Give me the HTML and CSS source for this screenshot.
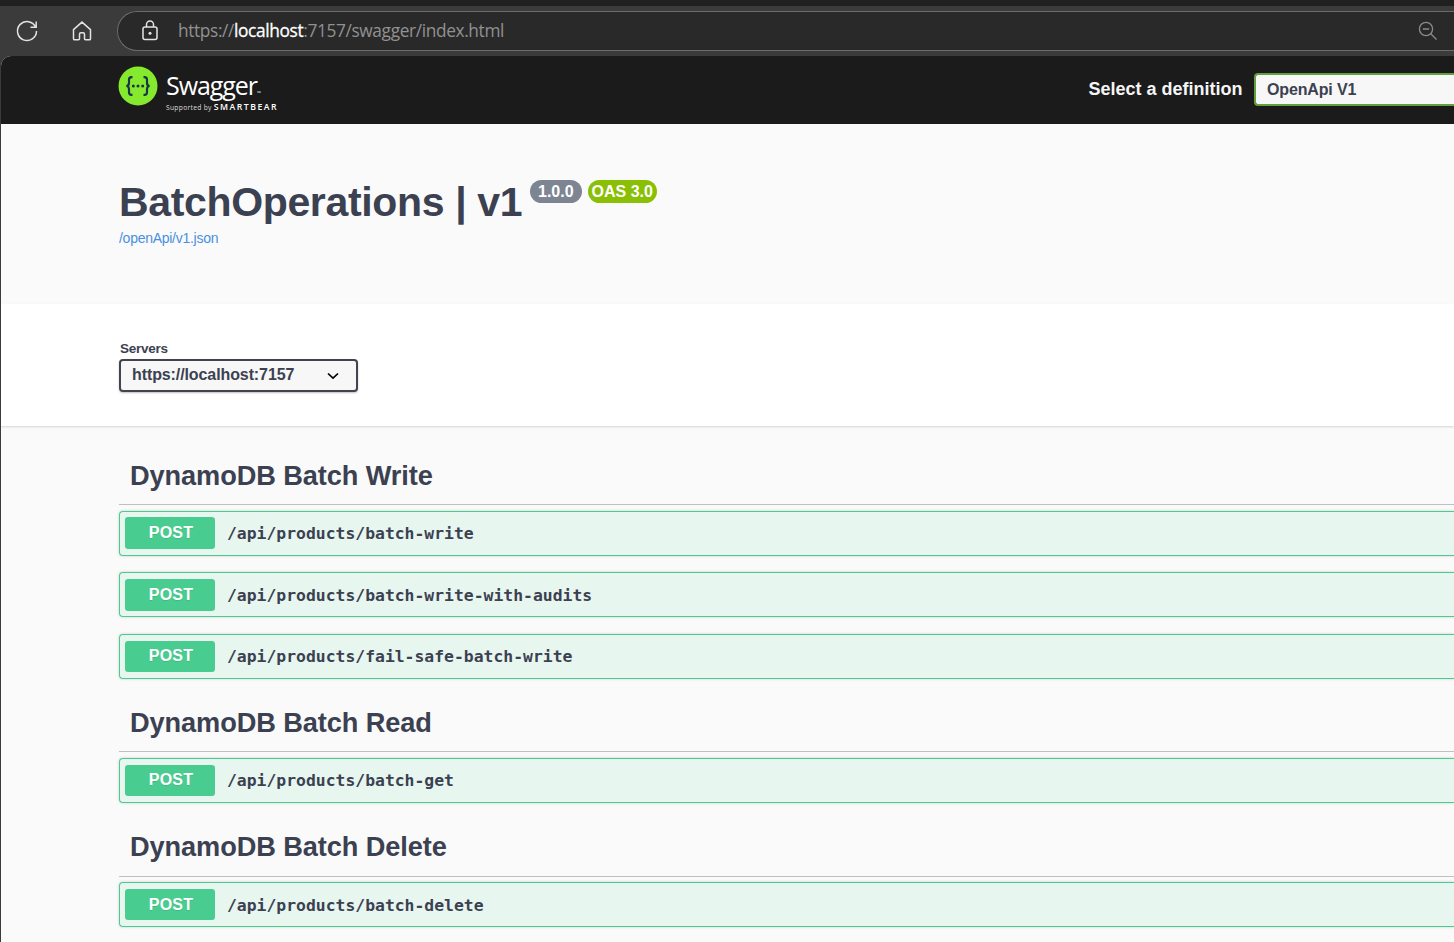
FILE: index.html
```html
<!DOCTYPE html>
<html lang="en">
<head>
<meta charset="utf-8">
<title>Swagger UI</title>
<link rel="stylesheet" href="styles.css">
</head>
<body>
<div class="browser">
  <div class="tabstrip"></div>
  <div class="toolbar">
    <svg class="ico reload" width="24" height="24" viewBox="0 0 24 24"><path d="M20.7 8.2A9.5 9.5 0 1 0 21.5 12M21.200 2.500v5.800h-5.700"/></svg>
    <svg class="ico home" width="24" height="24" viewBox="0 0 24 24"><path d="M3.5 10.6 12 3.1l8.5 7.5v9.1q0 1.1-1.1 1.1h-3.9q-1 0-1-1v-4.500q0-1.500-1.500-1.500h-2q-1.500 0-1.500 1.500v4.500q0 1-1 1H4.600q-1.100 0-1.100-1.100z"/></svg>
    <div class="address">
      <svg class="ico lock" width="20" height="24" viewBox="0 0 20 24"><rect x="3" y="8" width="14" height="12.500" rx="2"/><path d="M6.500 8V5.500a3.500 3.500 0 0 1 7 0V8"/><circle class="dot" cx="10" cy="14.200" r="1.500"/></svg>
      <span class="url">https://<b>localhost</b>:7157/swagger/index.html</span>
      <svg class="ico lens" width="20" height="20" viewBox="0 0 20 20"><circle cx="8" cy="8" r="6.600"/><path d="m12.800 12.800 5.700 5.700M4.800 8h6.400"/></svg>
    </div>
  </div>
</div>
<div class="page">
  <header class="topbar">
    <div class="logo">
      <svg width="40" height="40" viewBox="0 0 40 40"><circle cx="20" cy="20" r="19.500" fill="#85ea2d"/><g fill="none" stroke="#173647" stroke-width="2.200"><path d="M14.500 11.200h-1q-2.500 0-2.500 2.600v3.200q0 2.800-2.600 3 2.600.2 2.600 3v3.200q0 2.600 2.500 2.600h1M25.500 11.200h1q2.500 0 2.500 2.600v3.200q0 2.800 2.600 3-2.600.2-2.600 3v3.200q0 2.600-2.500 2.600h-1"/></g><g fill="#173647"><circle cx="15.300" cy="20" r="1.500"/><circle cx="20" cy="20" r="1.500"/><circle cx="24.700" cy="20" r="1.500"/></g></svg>
      <div class="brand">
        <div class="name">Swagger<span class="tm">™</span></div>
        <div class="support">Supported by <b>SMARTBEAR</b></div>
      </div>
    </div>
    <div class="definition"><span>Select a definition</span><div class="def-select">OpenApi V1</div></div>
  </header>
  <section class="info">
    <h1>BatchOperations | v1</h1>
    <span class="badge version">1.0.0</span><span class="badge oas">OAS 3.0</span>
    <a class="spec">/openApi/v1.json</a>
  </section>
  <section class="servers">
    <label>Servers</label>
    <div class="server-select"><span>https://localhost:7157</span><svg width="12" height="8" viewBox="0 0 12 8"><path d="m1 1.500 5 4.700 5-4.700" fill="none" stroke="#000" stroke-width="1.700"/></svg></div>
  </section>
  <main class="operations">
    <h2 class="first">DynamoDB Batch Write</h2>
    <div class="op lead"><span class="method">POST</span><code>/api/products/batch-write</code></div>
    <div class="op"><span class="method">POST</span><code>/api/products/batch-write-with-audits</code></div>
    <div class="op short"><span class="method">POST</span><code>/api/products/fail-safe-batch-write</code></div>
    <h2>DynamoDB Batch Read</h2>
    <div class="op short"><span class="method">POST</span><code>/api/products/batch-get</code></div>
    <h2 class="last">DynamoDB Batch Delete</h2>
    <div class="op final"><span class="method">POST</span><code>/api/products/batch-delete</code></div>
  </main>
</div>
</body>
</html>
```
FILE: styles.css
```css
* { box-sizing: border-box; }
body { margin: 0; height: 942px; overflow: hidden; background: #3b3b3b; color: #3b4151; font-family: "Liberation Sans", Arial, sans-serif; }
.tabstrip { height: 6px; background: #202020; }
.toolbar { height: 50px; display: flex; align-items: center; padding-left: 15px; }
.ico { flex: none; fill: none; stroke: #e3e3e3; stroke-width: 1.5; }
.home { margin-left: 31px; }
.address { flex: 1; height: 40px; margin-left: 23px; border: 1px solid #6b6b6b; border-right: 0; border-radius: 20px 0 0 20px; background: #292929; display: flex; align-items: center; padding: 0 16px 0 21.5px; }
.lock .dot { fill: #e3e3e3; stroke: none; }
.url { margin: -1px 0 0 18.5px; flex: 1; font: 17.3px/24px "Open Sans", "Noto Sans", sans-serif; color: #919191; letter-spacing: -0.36px; white-space: nowrap; }
.url b { font-weight: 400; color: #fff; -webkit-text-stroke: .3px #fff; }
.lens { stroke: #8b8b8b; stroke-width: 1.3; }
.page { margin-left: 1px; height: 886px; background: #fafafa; border-radius: 10px 0 0; overflow: hidden; }
.topbar { height: 68px; background: #1b1b1b; display: flex; justify-content: space-between; padding-left: 117px; }
.logo { display: flex; padding-top: 10px; }
.logo svg { margin-left: .4px; }
.brand { margin-left: 7.6px; padding-top: 3px; color: #fff; font-family: "Open Sans", sans-serif; white-space: nowrap; }
.name { height: 33px; font-size: 25px; line-height: 32px; letter-spacing: -1.05px; }
.tm { font-size: 5px; letter-spacing: 0; line-height: 1; }
.support { margin-top: 1px; height: 10px; font-size: 6.7px; line-height: 10px; letter-spacing: .3px; color: #ddd; }
.support b { font-size: 8.7px; line-height: 1; letter-spacing: 1.5px; color: #fff; font-weight: 600; }
.definition { display: flex; align-items: center; width: 366px; height: 67px; color: #f5f5f5; font-weight: 700; font-size: 18px; white-space: nowrap; }
.definition span { margin-left: .5px; }
.def-select { flex: 1; height: 33px; margin: 0 0 0 11.5px; border: 2px solid #62a03f; border-right: 0; border-radius: 4px 0 0 4px; background: #f7f7f7; color: #3b4151; font-size: 16px; line-height: 29px; letter-spacing: -.15px; padding-left: 11px; }
.info { height: 180px; padding: 54px 0 0 118px; display: grid; grid-template-columns: 403px auto 1fr; grid-template-rows: 50px 20px; align-items: start; }
h1 { margin: 0; font-size: 41px; line-height: 49px; letter-spacing: -.35px; white-space: nowrap; }
.badge { height: 23px; border-radius: 12px; margin: 2px 0 0 8px; padding: 0 8px; color: #fff; font-weight: 700; font-size: 16px; line-height: 23px; white-space: nowrap; }
.version { background: #7d8492; }
.oas { background: #89bf04; justify-self: start; margin-left: 6px; padding: 0 4px; }
.spec { color: #4990e2; font-size: 14px; line-height: 20px; letter-spacing: -.27px; }
.servers { height: 122px; background: #fff; box-shadow: 0 1px 2px rgba(0,0,0,.15); padding: 37px 0 0 118px; }
.servers label { display: block; font-size: 13.5px; letter-spacing: -.25px; font-weight: 700; line-height: 16px; padding-left: 1px; margin-bottom: 2px; }
.server-select { width: 239px; height: 33px; border: 2px solid #41444e; border-radius: 4px; background: #f7f7f7; box-shadow: 0 1px 2px rgba(0,0,0,.25); display: flex; justify-content: space-between; align-items: center; padding: 0 17px 0 11px; font-weight: 700; font-size: 16px; letter-spacing: -.1px; }
.server-select span { margin-top: -1px; }
.operations { padding-left: 118px; }
h2 { margin: 0 0 6px; height: 56px; border-bottom: 1px solid #bfc0c3; padding: 9px 0 0 11px; font-size: 27.2px; line-height: 36px; letter-spacing: -.1px; }
h2.first { height: 79px; padding-top: 32px; }
h2.last { height: 57px; margin-bottom: 5px; }
.op { height: 45px; margin-bottom: 17px; border: 1px solid #49cc90; border-right: 0; border-radius: 4px 0 0 4px; background: #e8f6f0; box-shadow: 0 0 3px rgba(0,0,0,.19); display: flex; align-items: flex-start; padding: 6px 0 0 5px; }
.op.lead { padding-top: 5px; margin-bottom: 16px; }
.method { width: 90px; height: 32px; border-radius: 3px; background: #49cc90; color: #fff; font-weight: 700; font-size: 16px; line-height: 31px; text-align: center; text-shadow: 0 1px 0 rgba(0,0,0,.1); letter-spacing: .2px; padding-left: 2px; }
.short .method { height: 31px; line-height: 29px; }
.final .method { height: 31px; }
.op code { margin: 5px 0 0 12px; font: 700 16.4px/24px "DejaVu Sans Mono", monospace; }
.short code { margin-top: 4px; }
```
